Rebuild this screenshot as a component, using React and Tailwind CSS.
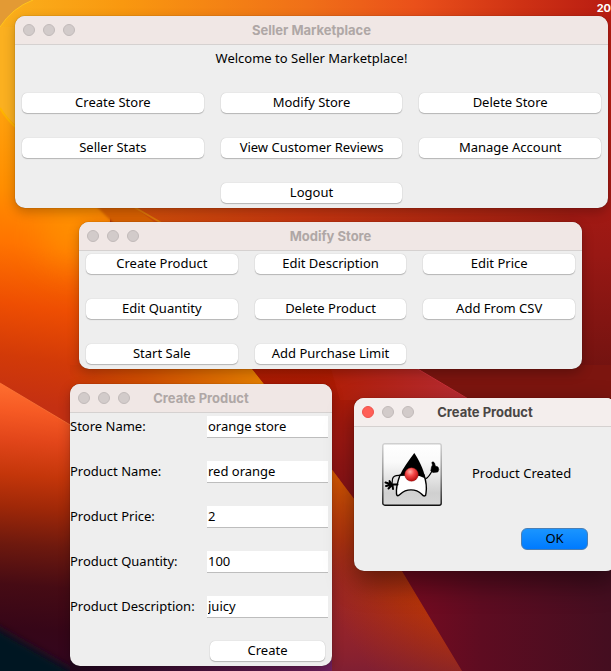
import React from "react";

function Wallpaper() {
  return (
    <svg
      className="absolute inset-0 h-full w-full"
      viewBox="0 0 611 671"
      preserveAspectRatio="none"
      aria-hidden="true"
    >
      <defs>
        <linearGradient id="top" x1="0" y1="0" x2="1" y2="0">
          <stop offset="0" stopColor="#fbb01c" />
          <stop offset="0.2" stopColor="#f9980f" />
          <stop offset="0.5" stopColor="#f07018" />
          <stop offset="0.68" stopColor="#ea501a" />
          <stop offset="0.85" stopColor="#cf3214" />
          <stop offset="1" stopColor="#b81c12" />
        </linearGradient>
        <linearGradient id="band" gradientUnits="userSpaceOnUse" x1="134" y1="0" x2="611" y2="0">
          <stop offset="0" stopColor="#d4500a" />
          <stop offset="0.35" stopColor="#c83610" />
          <stop offset="1" stopColor="#981812" />
        </linearGradient>
        <linearGradient id="leftSide" gradientUnits="userSpaceOnUse" x1="40" y1="100" x2="0" y2="400">
          <stop offset="0" stopColor="#ffa510" />
          <stop offset="0.3" stopColor="#ff8e00" />
          <stop offset="0.48" stopColor="#ff7400" />
          <stop offset="0.68" stopColor="#ee4e02" />
          <stop offset="0.85" stopColor="#d23a08" />
          <stop offset="1" stopColor="#c43012" />
        </linearGradient>
        <linearGradient id="rightSide" x1="0" y1="0" x2="0" y2="1">
          <stop offset="0" stopColor="#b81c12" />
          <stop offset="0.5" stopColor="#981814" />
          <stop offset="1" stopColor="#65110f" />
        </linearGradient>
        <linearGradient id="amber" gradientUnits="userSpaceOnUse" x1="70" y1="0" x2="260" y2="0">
          <stop offset="0" stopColor="#cc3808" />
          <stop offset="0.4" stopColor="#d45000" />
          <stop offset="1" stopColor="#ea8000" />
        </linearGradient>
        <linearGradient id="lowerLeft" gradientUnits="userSpaceOnUse" x1="30" y1="383" x2="10" y2="671">
          <stop offset="0" stopColor="#ff7030" />
          <stop offset="0.1" stopColor="#f65a24" />
          <stop offset="0.2" stopColor="#e2461a" />
          <stop offset="0.32" stopColor="#c4360a" />
          <stop offset="0.43" stopColor="#a02808" />
          <stop offset="0.56" stopColor="#6e190e" />
          <stop offset="0.7" stopColor="#460b14" />
          <stop offset="0.85" stopColor="#360618" />
          <stop offset="1" stopColor="#320620" />
        </linearGradient>
        <linearGradient id="middleRed" x1="0" y1="0" x2="0" y2="1">
          <stop offset="0" stopColor="#b01c00" />
          <stop offset="0.5" stopColor="#a01813" />
          <stop offset="1" stopColor="#7c1019" />
        </linearGradient>
        <linearGradient id="roseFold" x1="0" y1="0" x2="1" y2="0">
          <stop offset="0" stopColor="#b01e08" />
          <stop offset="1" stopColor="#b82c34" />
        </linearGradient>
        <linearGradient id="ember" gradientUnits="userSpaceOnUse" x1="430" y1="590" x2="350" y2="640">
          <stop offset="0" stopColor="#ba3606" />
          <stop offset="0.35" stopColor="#ae300e" />
          <stop offset="1" stopColor="#962429" />
        </linearGradient>
        <linearGradient id="emberShade" x1="0" y1="0" x2="0" y2="1">
          <stop offset="0" stopColor="#e06000" />
          <stop offset="0.35" stopColor="#b8380c" stopOpacity="0.7" />
          <stop offset="0.65" stopColor="#9a242a" stopOpacity="0" />
          <stop offset="1" stopColor="#6a1a3c" stopOpacity="0.5" />
        </linearGradient>
        <linearGradient id="wine" x1="0" y1="0" x2="1" y2="0">
          <stop offset="0" stopColor="#7a0a20" />
          <stop offset="0.4" stopColor="#5e0c21" />
          <stop offset="1" stopColor="#440e20" />
        </linearGradient>
        <linearGradient id="floor" x1="0" y1="0" x2="1" y2="0">
          <stop offset="0" stopColor="#20061c" />
          <stop offset="1" stopColor="#72205e" />
        </linearGradient>
        <filter id="soft" x="-100%" y="-100%" width="300%" height="300%">
          <feGaussianBlur stdDeviation="18" />
        </filter>
        <filter id="edge" x="-20%" y="-20%" width="140%" height="140%">
          <feGaussianBlur stdDeviation="1" />
        </filter>
        <filter id="haze" x="-30%" y="-30%" width="160%" height="160%">
          <feGaussianBlur stdDeviation="4" />
        </filter>
      </defs>
      <rect width="611" height="671" fill="#a02010" />
      <rect width="611" height="110" fill="url(#top)" />
      <path d="M0 100 H110 V440 H0Z" fill="url(#leftSide)" />
      <path d="M0 27 Q12 8 33 0 H0Z" fill="#e39a34" />
      <path d="M0 27 Q12 8 33 0" fill="none" stroke="#ffc51c" strokeWidth="1" />
      <path d="M0 27 H20 V128 Q8 120 0 108Z" fill="#fbb020" />
      <path d="M0 108 Q7 120 18 129" fill="none" stroke="#ffb400" strokeWidth="2" />
      <ellipse cx="70" cy="235" rx="25" ry="30" fill="#ffa000" filter="url(#soft)" opacity="0.6" />
      <path d="M97 207 L130 240 H300 V200 H97Z" fill="#dc6204" filter="url(#edge)" />
      <path d="M134 200 V207 L165 230 H611 V200Z" fill="url(#band)" />
      <path d="M134 207 L165 225" stroke="#e07808" strokeWidth="2" />
      <rect x="570" y="100" width="41" height="310" fill="url(#rightSide)" />
      <path d="M70 365 H249 L340 479 V671 H70Z" fill="url(#amber)" />
      <path d="M249 365 H620 V520 H370 L332 470Z" fill="url(#middleRed)" />
      <path d="M330 365 H411 L470 400 H340Z" fill="url(#roseFold)" />
      <path d="M411 365 L470 400 H611 V365Z" fill="#7c150f" />
      <path d="M411 365 L470 400" stroke="#c9303a" strokeWidth="1" />
      <path d="M330 467 L360 507 L402 571 L462 671 H330Z" fill="url(#ember)" />
      <path d="M330 467 L360 507 L402 571 L462 671 H330Z" fill="url(#emberShade)" />
      <path d="M402 571 L462 671 H611 V560 H395Z" fill="url(#wine)" />
      <path d="M0 383 L75 428 V671 H0Z" fill="url(#lowerLeft)" />
      <path d="M0 383 L72 426" stroke="#ff7c3c" strokeWidth="1" opacity="0.7" />
      <path d="M-20 618 L75 672 V700 H-20Z" fill="#021322" filter="url(#haze)" />
      <rect x="70" y="660" width="262" height="11" fill="url(#floor)" />
    </svg>
  );
}

function Window({ title, place, active = false, children }) {
  return (
    <section
      className={`absolute overflow-hidden rounded-[10px] bg-[#eeeeee] ${place} ${
        active
          ? "shadow-[0_12px_28px_rgba(0,0,0,0.45),0_0_1px_rgba(0,0,0,0.6)]"
          : "shadow-[0_4px_12px_rgba(0,0,0,0.25),0_0_1px_rgba(0,0,0,0.5)]"
      }`}
    >
      <header
        className={`relative flex h-[29px] items-center justify-center border-b border-[#d5d1d0] ${
          active ? "bg-[#f4eeed]" : "bg-[#f0e7e5]"
        }`}
      >
        <div className="absolute left-2 flex gap-2">
          <button
            type="button"
            aria-label="Close"
            className={`size-3 rounded-full border ${
              active ? "border-[#ee514a] bg-[#ff5f57]" : "border-[#c1bab9] bg-[#d2cbca]"
            }`}
          />
          <button type="button" aria-label="Minimize" className="size-3 rounded-full border border-[#c1bab9] bg-[#d2cbca]" />
          <button type="button" aria-label="Zoom" className="size-3 rounded-full border border-[#c1bab9] bg-[#d2cbca]" />
        </div>
        <h2
          className={`pb-px font-['Inter',sans-serif] text-[13px] leading-4 font-bold ${
            active ? "text-[#4a4645]" : "text-[#afa7a6]"
          }`}
        >
          {title}
        </h2>
      </header>
      {children}
    </section>
  );
}

function PushButton({ children, className = "" }) {
  return (
    <button
      type="button"
      className={`h-5 rounded-[5px] bg-white text-center leading-[18px] pb-[2px] whitespace-nowrap shadow-[0_1px_1px_rgba(0,0,0,0.22),0_0_1px_rgba(0,0,0,0.25)] ${className}`}
    >
      {children}
    </button>
  );
}

function Duke() {
  return (
    <svg width="60" height="63" viewBox="0 0 60 63" role="img" aria-label="Java">
      <defs>
        <linearGradient id="tile" x1="0" y1="0" x2="0" y2="1">
          <stop offset="0" stopColor="#ffffff" />
          <stop offset="0.3" stopColor="#fafafa" />
          <stop offset="0.8" stopColor="#d0d0d0" />
          <stop offset="1" stopColor="#d6d6d6" />
        </linearGradient>
        <linearGradient id="frame" x1="0" y1="0" x2="0" y2="1">
          <stop offset="0" stopColor="#cfcfcf" />
          <stop offset="0.5" stopColor="#888888" />
          <stop offset="1" stopColor="#111111" />
        </linearGradient>
        <radialGradient id="nose" cx="0.4" cy="0.3" r="0.7">
          <stop offset="0" stopColor="#ffb0a8" />
          <stop offset="0.45" stopColor="#f54848" />
          <stop offset="1" stopColor="#b80c0c" />
        </radialGradient>
      </defs>
      <rect x="0.8" y="0.8" width="58.4" height="61.4" rx="2" fill="url(#tile)" stroke="url(#frame)" strokeWidth="1.4" />
      <path d="M18 32.500 Q11.500 32 10.500 36 L10 41" fill="none" stroke="#000" strokeWidth="1.2" />
      <path d="M43.500 36 Q47 34 50 28" fill="none" stroke="#000" strokeWidth="1.2" />
      <path
        d="M18 32 C15.500 39 14 46 14.500 51 C15 53.500 16.500 53 18.500 51 C24 45.500 34 45.500 39.500 51 C42 54 44 53.500 44 50 C45 44 44 38 42 32Z"
        fill="#fff"
        stroke="#000"
        strokeWidth="1.4"
      />
      <path d="M32.300 10 C27 17 21 25 17.500 33 L24 32 H35 L43.500 35.500 C41.500 26 36.500 16 32.300 10Z" fill="#000" />
      <circle cx="29.500" cy="31.500" r="6.800" fill="url(#nose)" stroke="#8c1010" strokeWidth="0.4" />
      <path
        d="M15.500 41.500 L10 41.500 M10 41.500 L3.500 39.500 M10 41.500 L4 43 M10 42 L6.500 45.500 M10.500 42 L11 46 M9.500 41 L7.500 38"
        fill="none"
        stroke="#000"
        strokeWidth="2"
        strokeLinecap="round"
      />
      <path
        d="M49.500 24 L50.500 22 L49.800 19.500 Q51 18 52.500 20 L53.300 23 L56 24 L56.800 26.500 L55.800 29 L51 29.500 L48.800 28Z"
        fill="#000"
        stroke="#000"
        strokeWidth="0.6"
        strokeLinejoin="round"
      />
    </svg>
  );
}

const fields = [
  { id: "store", label: "Store Name:", value: "orange store" },
  { id: "name", label: "Product Name:", value: "red orange" },
  { id: "price", label: "Product Price:", value: "2" },
  { id: "quantity", label: "Product Quantity:", value: "100" },
  { id: "description", label: "Product Description:", value: "juicy" },
];

const modifyActions = [
  "Create Product",
  "Edit Description",
  "Edit Price",
  "Edit Quantity",
  "Delete Product",
  "Add From CSV",
  "Start Sale",
  "Add Purchase Limit",
];

const sellerActions = [
  "Create Store",
  "Modify Store",
  "Delete Store",
  "Seller Stats",
  "View Customer Reviews",
  "Manage Account",
];

export default function App() {
  return (
    <main className="relative min-h-screen overflow-hidden bg-[#bd2d0e] font-['Noto_Sans',sans-serif] text-[13px] leading-5 text-black">
      <Wallpaper />
      <span className="absolute top-0 right-0 font-['Inter',sans-serif] text-[11px] leading-4 font-bold text-white">20</span>

      <Window title="Seller Marketplace" place="left-[15px] top-4 w-[593px]">
        <div className="grid grid-cols-3 gap-x-[17px] gap-y-[25px] px-[7px] pt-[3px] pb-[5px]">
          <p className="col-span-3 text-center">Welcome to Seller Marketplace!</p>
          {sellerActions.map((name) => (
            <PushButton key={name}>{name}</PushButton>
          ))}
          <PushButton className="col-start-2">Logout</PushButton>
        </div>
      </Window>

      <Window title="Modify Store" place="left-[79px] top-[222px] w-[503px]">
        <div className="grid grid-cols-3 gap-x-[17px] gap-y-[25px] px-[7px] pt-[3px] pb-[5px]">
          {modifyActions.map((name) => (
            <PushButton key={name}>{name}</PushButton>
          ))}
        </div>
      </Window>

      <Window title="Create Product" place="left-[70px] top-[384px] w-[262px]">
        <form className="flex flex-col gap-[23px] pt-[3px] pr-1 pb-[5px]">
          {fields.map((field) => (
            <div key={field.id} className="flex items-center">
              <label htmlFor={field.id} className="w-[137px] shrink-0 pb-[2px] whitespace-nowrap">
                {field.label}
              </label>
              <input
                id={field.id}
                type="text"
                defaultValue={field.value}
                className="h-[22px] min-w-0 flex-1 border-b border-[#bdbdbd] bg-white px-px pb-px outline-none"
              />
            </div>
          ))}
          <PushButton className="mr-[3px] ml-[140px]">Create</PushButton>
        </form>
      </Window>

      <Window title="Create Product" place="left-[354px] top-[398px] w-[262px]" active>
        <div className="flex flex-col gap-[22px] px-7 pt-4 pb-[21px]">
          <div className="flex items-center gap-[30px]">
            <Duke />
            <p className="pb-1 whitespace-nowrap">Product Created</p>
          </div>
          <button
            type="button"
            className="h-[22px] w-[67px] self-end rounded-[6px] border border-[#4a7fb5] bg-linear-to-b from-[#1a95ff] to-[#007aff] pb-[2px] text-center leading-[18px]"
          >
            OK
          </button>
        </div>
      </Window>
    </main>
  );
}
